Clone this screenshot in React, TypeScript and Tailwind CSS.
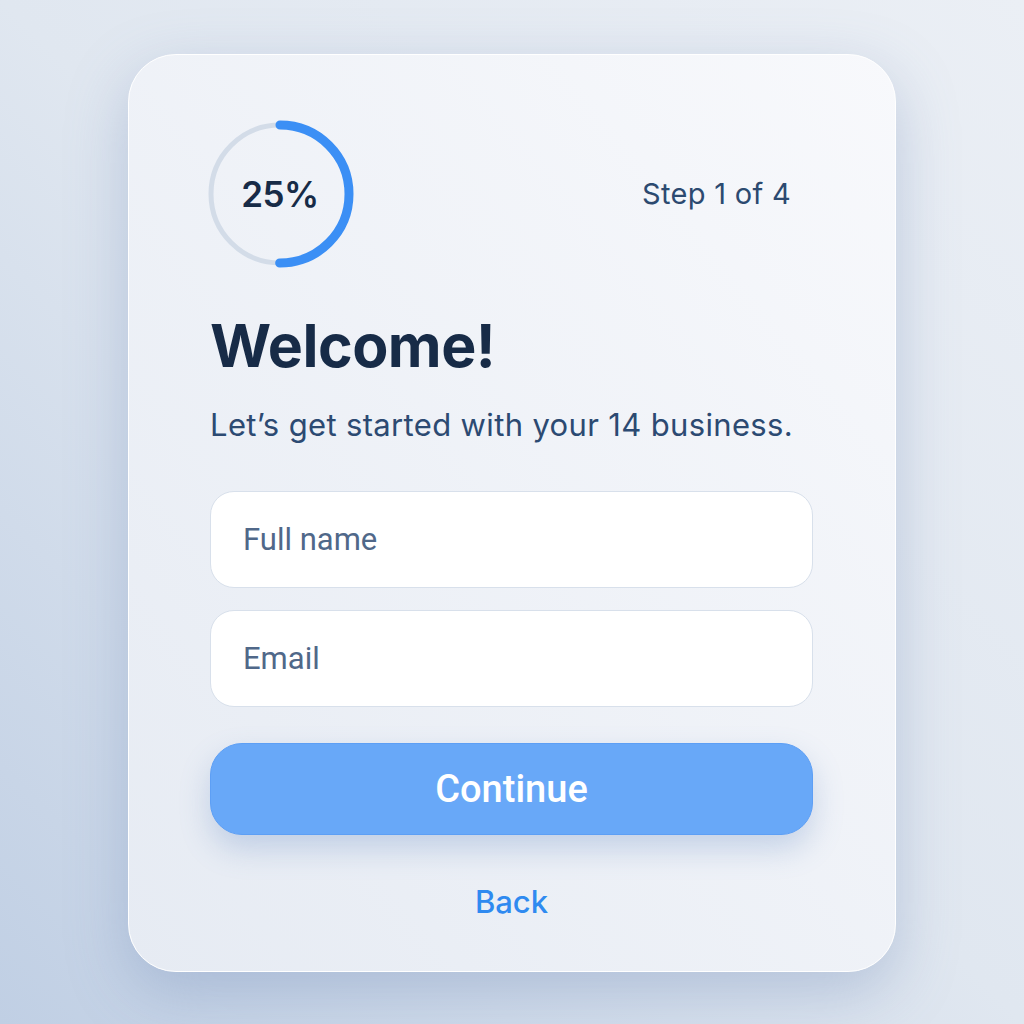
import React from 'react';

// Progress ring drawn as svg: gray track + blue arc
function ProgressRing({ percent }: { percent: number }) {
  const r = 69;
  const c = 2 * Math.PI * r;
  return (
    <div className="relative -ml-[4px] w-[148px] h-[148px]">
      <svg width="148" height="148" viewBox="0 0 148 148" className="-rotate-90">
        <circle cx="74" cy="74" r={r} fill="none" stroke="#d3dce8" strokeWidth="5" />
        <circle
          cx="74"
          cy="74"
          r={r}
          fill="none"
          stroke="#3b8ff5"
          strokeWidth="9"
          strokeLinecap="round"
          strokeDasharray={`${c * 0.5} ${c}`}
        />
      </svg>
      <div className="absolute inset-0 flex items-center justify-center">
        <span className="text-[35px] font-semibold tracking-[-0.5px] text-[#172b47]">{percent}%</span>
      </div>
    </div>
  );
}

const inputCls =
  'h-[97px] w-full rounded-[24px] border border-[#d8e0eb] bg-white px-[32px] text-[31px] text-[#4a6285] placeholder:text-[#506889] outline-none font-[family-name:Roboto]';

export default function App() {
  return (
    <div
      className="w-[1024px] h-[1024px] flex items-start justify-center pt-[54px] bg-gradient-to-tr from-[#c0cfe4] via-[#e0e7f0] to-[#ebeff5]"
      style={{ fontFamily: 'Inter, "Noto Sans", sans-serif' }}
    >
      <div className="w-[768px] h-[918px] rounded-[48px] border border-white bg-gradient-to-bl from-[#f8f9fc] to-[#e6ebf3] shadow-[0_20px_60px_rgba(110,135,180,0.35)] pl-[81px] pr-[82px] pt-[65px]">
        <div className="flex items-center justify-between">
          <ProgressRing percent={25} />
          <span className="mr-[22px] text-[29px] tracking-[0.3px] text-[#2c4a70]">Step 1 of 4</span>
        </div>

        <h1 className="mt-[43px] text-[59px] leading-[70px] font-bold tracking-[-0.5px] text-[#172b47]">Welcome!</h1>
        <p className="mt-[24px] text-[31px] leading-[40px] tracking-[0.35px] text-[#2c4a72]">Let’s get started with your 14 business.</p>

        <div className="mt-[46px] flex flex-col gap-[22px]">
          <input placeholder="Full name" className={inputCls} />
          <input placeholder="Email" className={inputCls} />
        </div>

        <button className="mt-[36px] h-[92px] w-full rounded-[32px] border border-[#5d9ff5] bg-[#68a8f8] text-[38px] font-medium text-white shadow-[0_14px_30px_rgba(90,130,190,0.28)] font-[family-name:Roboto]">
          Continue
        </button>

        <div className="mt-[44px] flex justify-center">
          <button className="text-[31px] font-medium text-[#2f8af0]">Back</button>
        </div>
      </div>
    </div>
  );
}
